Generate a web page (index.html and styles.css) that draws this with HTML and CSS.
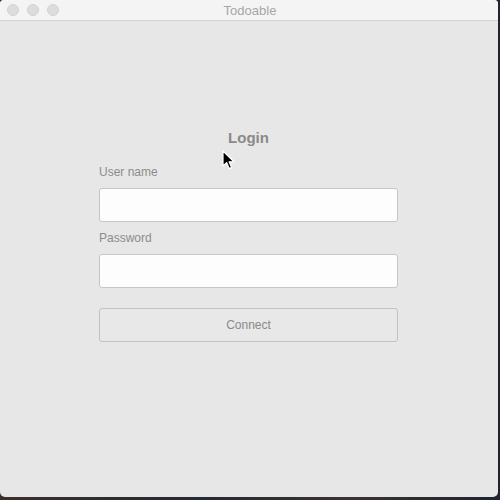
FILE: index.html
```html
<!DOCTYPE html>
<html>
<head>
<meta charset="utf-8">
<title>Todoable</title>
<link rel="stylesheet" href="styles.css">
</head>
<body>
<div class="window">
  <div class="titlebar">
    <div class="lights">
      <span class="light"></span>
      <span class="light"></span>
      <span class="light"></span>
    </div>
    <div class="title">Todoable</div>
  </div>
  <div class="content">
    <form class="login">
      <div class="heading">Login</div>
      <label class="label">User name</label>
      <input class="field" type="text">
      <label class="label label-second">Password</label>
      <input class="field" type="password">
      <button class="connect" type="button">Connect</button>
    </form>
    <svg class="cursor" width="13" height="20" viewBox="0 0 13 20">
      <path d="M1 1 L1 16 L4.6 12.6 L7.2 18.6 L9.6 17.6 L7.1 11.8 L12 11.8 Z" fill="#000" stroke="#fff" stroke-width="1.2" stroke-linejoin="round"/>
    </svg>
  </div>
</div>
</body>
</html>
```
FILE: styles.css
```css
* { box-sizing: border-box; }
html, body { margin: 0; padding: 0; }
body {
  width: 500px;
  height: 500px;
  background: linear-gradient(90deg, #3a2f2c 0%, #262a33 40%, #3b3230 70%, #1f2430 100%);
  font-family: "Liberation Sans", Arial, sans-serif;
  overflow: hidden;
}
.window {
  width: 498px;
  height: 497px;
  background: #e7e7e7;
  border-radius: 4px 4px 5px 5px;
  display: flex;
  flex-direction: column;
  overflow: hidden;
}
.titlebar {
  height: 21px;
  flex: none;
  background: #f4f4f4;
  border-bottom: 1px solid #d3d3d3;
  position: relative;
  display: flex;
  align-items: center;
}
.lights {
  display: flex;
  gap: 8px;
  padding-left: 7px;
}
.light {
  width: 12px;
  height: 12px;
  border-radius: 50%;
  background: #dcdcdc;
  border: 1px solid #d1d1d1;
}
.title {
  position: absolute;
  left: 0;
  right: 0;
  top: 0;
  line-height: 21px;
  text-align: center;
  font-size: 13px;
  color: #a6a6a6;
  padding-left: 2px;
}
.content {
  flex: 1;
  position: relative;
  padding-top: 108px;
}
.login {
  width: 299px;
  margin: 0 0 0 99px;
  display: flex;
  flex-direction: column;
}
.heading {
  text-align: center;
  font-weight: bold;
  font-size: 15px;
  line-height: 18px;
  color: #8a8a8a;
  margin-bottom: 18px;
}
.label {
  font-size: 12px;
  line-height: 14px;
  color: #8c8c8c;
  margin-bottom: 9px;
}
.label-second { margin-top: 9px; }
.field {
  height: 34px;
  margin: 0;
  border: 1px solid #c6c6c6;
  border-radius: 3px;
  background: #fdfdfd;
  outline: none;
}
.connect {
  height: 34px;
  margin-top: 20px;
  border: 1px solid #c2c2c2;
  border-radius: 3px;
  background: #e8e8e8;
  font-family: "Liberation Sans", Arial, sans-serif;
  font-size: 12px;
  color: #8a8a8a;
  padding: 0;
}
.cursor {
  position: absolute;
  left: 222px;
  top: 129px;
}
```
